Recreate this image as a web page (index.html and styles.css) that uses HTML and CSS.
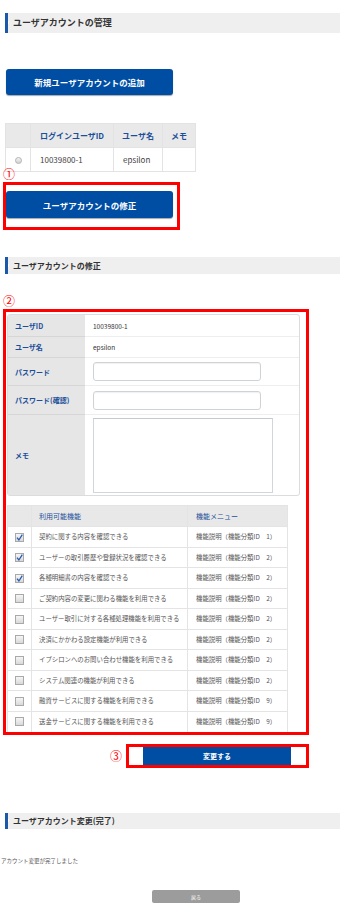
FILE: index.html
```html
<!DOCTYPE html>
<html lang="ja">
<head>
  <meta charset="UTF-8">
  <meta name="viewport" content="width=device-width, initial-scale=1">
  <title>ユーザアカウントの管理</title>
  <link rel="stylesheet" href="styles.css">
</head>
<body>
<div class="page">

  <!-- 一覧 -->
  <h2 class="sec-title sec-title-lg">ユーザアカウントの管理</h2>
  <button class="btn btn-main btn-add">新規ユーザアカウントの追加</button>

  <table class="list">
    <tr>
      <th class="col-sel"></th>
      <th class="col-id">ログインユーザID</th>
      <th class="col-name">ユーザ名</th>
      <th class="col-memo">メモ</th>
    </tr>
    <tr>
      <td class="col-sel"><span class="radio"></span></td>
      <td>10039800-1</td>
      <td>epsilon</td>
      <td></td>
    </tr>
  </table>

  <div class="mark-box box-edit">
    <span class="mark mark-top">①</span>
    <button class="btn btn-main btn-edit">ユーザアカウントの修正</button>
  </div>

  <!-- 修正 -->
  <h2 class="sec-title sec-title-edit">ユーザアカウントの修正</h2>

  <div class="mark-box box-form">
    <span class="mark mark-top">②</span>
    <table class="form">
      <tr class="r-id">
        <th>ユーザID</th>
        <td>10039800-1</td>
      </tr>
      <tr class="r-name">
        <th>ユーザ名</th>
        <td>epsilon</td>
      </tr>
      <tr class="r-pass">
        <th>パスワード</th>
        <td><input type="password" class="field"></td>
      </tr>
      <tr class="r-pass2">
        <th>パスワード(確認)</th>
        <td><input type="password" class="field"></td>
      </tr>
      <tr class="r-memo">
        <th>メモ</th>
        <td><textarea class="memo"></textarea></td>
      </tr>
    </table>

    <table class="func">
      <tr>
        <th class="c-chk"></th>
        <th class="c-name">利用可能機能</th>
        <th class="c-menu">機能メニュー</th>
      </tr>
      <tr>
        <td class="c-chk"><span class="cb on"><svg viewBox="0 0 9 9" width="9" height="9"><path d="M2 4.6 L3.9 7 L7.3 1.6" fill="none" stroke="#2a5bb0" stroke-width="1.3"/></svg></span></td>
        <td>契約に関する内容を確認できる</td>
        <td>機能説明（機能分類ID　1）</td>
      </tr>
      <tr>
        <td class="c-chk"><span class="cb on"><svg viewBox="0 0 9 9" width="9" height="9"><path d="M2 4.6 L3.9 7 L7.3 1.6" fill="none" stroke="#2a5bb0" stroke-width="1.3"/></svg></span></td>
        <td>ユーザーの取引履歴や登録状況を確認できる</td>
        <td>機能説明（機能分類ID　2）</td>
      </tr>
      <tr>
        <td class="c-chk"><span class="cb on"><svg viewBox="0 0 9 9" width="9" height="9"><path d="M2 4.6 L3.9 7 L7.3 1.6" fill="none" stroke="#2a5bb0" stroke-width="1.3"/></svg></span></td>
        <td>各種明細書の内容を確認できる</td>
        <td>機能説明（機能分類ID　2）</td>
      </tr>
      <tr>
        <td class="c-chk"><span class="cb"></span></td>
        <td>ご契約内容の変更に関わる機能を利用できる</td>
        <td>機能説明（機能分類ID　2）</td>
      </tr>
      <tr>
        <td class="c-chk"><span class="cb"></span></td>
        <td>ユーザー取引に対する各種処理機能を利用できる</td>
        <td>機能説明（機能分類ID　2）</td>
      </tr>
      <tr>
        <td class="c-chk"><span class="cb"></span></td>
        <td>決済にかかわる設定機能が利用できる</td>
        <td>機能説明（機能分類ID　2）</td>
      </tr>
      <tr>
        <td class="c-chk"><span class="cb"></span></td>
        <td>イプシロンへのお問い合わせ機能を利用できる</td>
        <td>機能説明（機能分類ID　2）</td>
      </tr>
      <tr>
        <td class="c-chk"><span class="cb"></span></td>
        <td>システム関連の機能が利用できる</td>
        <td>機能説明（機能分類ID　2）</td>
      </tr>
      <tr>
        <td class="c-chk"><span class="cb"></span></td>
        <td>融資サービスに関する機能を利用できる</td>
        <td>機能説明（機能分類ID　9）</td>
      </tr>
      <tr>
        <td class="c-chk"><span class="cb"></span></td>
        <td>送金サービスに関する機能を利用できる</td>
        <td>機能説明（機能分類ID　9）</td>
      </tr>
    </table>
  </div>

  <div class="submit-row">
    <span class="mark">③</span>
    <div class="mark-box box-submit">
      <button class="btn btn-submit">変更する</button>
    </div>
  </div>

  <!-- 完了 -->
  <h2 class="sec-title sec-title-done">ユーザアカウント変更(完了)</h2>
  <p class="done-msg">アカウント変更が完了しました</p>
  <div class="back-row">
    <button class="btn btn-back">戻る</button>
  </div>

</div>
</body>
</html>
```

FILE: styles.css
```css
/* RESET & DASAR */
* {
  margin: 0;
  padding: 0;
  box-sizing: border-box;
}
body {
  font-family: "Noto Sans CJK JP", "Liberation Sans", sans-serif;
  color: #333;
  background: #fff;
}
.page {
  padding: 13px 0 20px 5px;
}

/* ----- JUDUL SEKSI ----- */
.sec-title {
  height: 17px;
  line-height: 17px;
  background: #efefef;
  border-left: 3px solid #1c58aa;
  padding-left: 5px;
  font-size: 8px;
  font-weight: bold;
  color: #333;
  position: relative;
}
.sec-title::before {
  content: "";
  position: absolute;
  left: 0;
  top: 50%;
  width: 1px;
  height: 3px;
  margin-top: -2px;
  background: #fff;
}
.sec-title-lg {
  height: 20px;
  line-height: 20px;
  font-size: 9px;
}
.sec-title-edit {
  margin-top: 27px;
}
.sec-title-done {
  margin-top: 45px;
  height: 16px;
  line-height: 16px;
}

/* ----- TOMBOL ----- */
.btn {
  display: block;
  border: none;
  font-family: inherit;
  color: #fff;
  font-weight: bold;
  cursor: pointer;
}
.btn-main {
  width: 167px;
  height: 26px;
  background: #004ea4;
  border-radius: 3px;
  font-size: 8.5px;
  box-shadow: 0 1px 1px rgba(0,0,0,0.35);
}
.btn-add {
  margin: 36px 0 0 1px;
}
.btn-edit {
  height: 27px;
}
.btn-submit {
  width: 148px;
  height: 18px;
  margin-left: 14px;
  background: #004ea4;
  font-size: 7px;
}
.btn-back {
  width: 88px;
  height: 13px;
  background: #9c9c9c;
  border-radius: 2px;
  font-size: 5px;
  font-weight: normal;
}

/* ----- TANDA MERAH ----- */
.mark-box {
  border: 3px solid #f00;
  position: relative;
}
.mark {
  color: #f00;
  font-size: 12px;
  line-height: 12px;
}
.mark-top {
  position: absolute;
  left: -3px;
  top: -17px;
}
.box-edit {
  width: 177px;
  margin: 10px 0 0 -2px;
  padding: 6px 0 9px 0;
}
.box-form {
  width: 306px;
  margin: 35px 0 0 -2px;
  padding: 2px 0 0 1px;
}
.submit-row {
  width: 304px;
  margin-top: 9px;
  display: flex;
  align-items: center;
  justify-content: flex-end;
  gap: 4px;
}
.box-submit {
  width: 183px;
  height: 24px;
}

/* ----- TABEL DAFTAR ----- */
.list {
  margin-top: 28px;
  width: 190px;
  border-collapse: collapse;
  table-layout: fixed;
  font-size: 8px;
}
.list th,
.list td {
  border: 1px solid #e3e3e3;
  height: 24px;
  padding: 0 0 0 9px;
  text-align: left;
  font-weight: normal;
  white-space: nowrap;
}
.list th {
  background: #e9e9e9;
  color: #1b4f9a;
  font-weight: bold;
  text-align: center;
  padding: 0;
}
.list td {
  color: #444;
}
.list .col-sel { width: 25px; text-align: center; padding: 0; }
.list .col-id { width: 83px; }
.list .col-name { width: 49px; }
.list .col-memo { width: 33px; }
.radio {
  display: inline-block;
  width: 7px;
  height: 7px;
  border-radius: 50%;
  border: 1px solid #b5b5b5;
  background: linear-gradient(#f4f4f4, #d0d0d0);
  vertical-align: middle;
}

/* ----- FORM ----- */
.form {
  width: 293px;
  border-collapse: separate;
  border-spacing: 0;
  border: 1px solid #dcdcdc;
  border-radius: 3px;
  overflow: hidden;
  table-layout: fixed;
}
.form th,
.form td {
  border-top: 1px solid #eee;
  text-align: left;
  vertical-align: middle;
}
.form tr:first-child th,
.form tr:first-child td {
  border-top: none;
}
.form th {
  width: 77px;
  background: #e6e6e6;
  border-top-color: #d6d6d6;
  padding-left: 7px;
  font-size: 7px;
  font-weight: bold;
  color: #1b4f9a;
}
.form td {
  padding-left: 8px;
  font-size: 6.5px;
  color: #333;
}
.r-id, .r-name { height: 21px; }
.r-pass { height: 28px; }
.r-pass2 { height: 29px; }
.r-memo { height: 81px; }
.field {
  display: block;
  width: 168px;
  height: 19px;
  border: 1px solid #cfd3d8;
  border-radius: 3px;
  background: #fff;
  box-shadow: inset 0 1px 1px rgba(0,0,0,0.06);
}
.memo {
  display: block;
  width: 180px;
  height: 75px;
  border: 1px solid #d2d6dc;
  border-top-color: #c3c9d2;
  resize: none;
}

/* ----- TABEL FUNGSI ----- */
.func {
  margin-top: 9px;
  width: 280px;
  border-collapse: collapse;
  table-layout: fixed;
  font-size: 6.4px;
}
.func th,
.func td {
  border: 1px solid #e4e4e4;
  height: 20.5px;
  text-align: left;
  vertical-align: middle;
  white-space: nowrap;
}
.func tr:last-child td {
  border-bottom: none;
}
.func th {
  background: #e8e8e8;
  color: #1b4f9a;
  font-weight: normal;
  font-size: 7px;
  height: 21px;
}
.func td {
  color: #555;
}
.func .c-chk { width: 24px; text-align: center; }
.func .c-name { width: 156px; }
.func .c-menu { width: 100px; }
.func th:nth-child(2), .func td:nth-child(2) { padding-left: 7px; }
.func th:nth-child(3), .func td:nth-child(3) { padding-left: 8px; }
.cb {
  display: inline-block;
  width: 9px;
  height: 9px;
  border: 1px solid #a9a9a9;
  background: linear-gradient(#f6f6f6, #d9d9d9);
  vertical-align: middle;
  position: relative;
}
.cb svg {
  position: absolute;
  left: -1px;
  top: -1px;
}

/* ----- SELESAI ----- */
.done-msg {
  margin: 28px 0 0 -4px;
  font-size: 5.5px;
  line-height: 8px;
  color: #555;
}
.back-row {
  margin-top: 25px;
  padding-left: 147px;
}
```
